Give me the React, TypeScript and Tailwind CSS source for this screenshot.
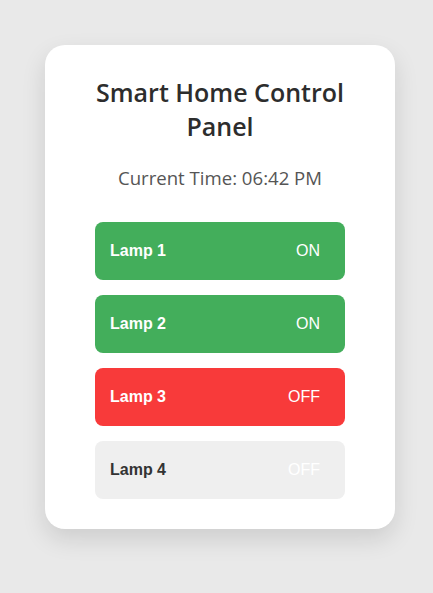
const lamps = [
  { name: "Lamp 1", state: "ON", style: "bg-[#43ae5b] text-white" },
  { name: "Lamp 2", state: "ON", style: "bg-[#43ae5b] text-white" },
  { name: "Lamp 3", state: "OFF", style: "bg-[#f83a3a] text-white" },
  { name: "Lamp 4", state: "OFF", style: "bg-[#efefef] text-[#333]" },
];

export default function App() {
  return (
    <div className="min-h-[593px] w-full bg-[#e9e9e9] pt-[45px] pl-[45px] flex">
      {/* Panel card */}
      <div className="w-[350px] h-fit bg-white rounded-[20px] px-[50px] py-[30px] shadow-[0_10px_25px_rgba(0,0,0,0.12)]">
        <h2 className="text-center text-[25px] leading-[34px] font-semibold text-[#2d2d2d] whitespace-nowrap font-['Open_Sans',sans-serif]">
          Smart Home Control
          <br />
          Panel
        </h2>
        <p className="text-center text-[18.6px] leading-[27px] text-[#555] mt-[21px] font-['Open_Sans',sans-serif]">
          Current Time: 06:42 PM
        </p>

        <div className="mt-[31px] flex flex-col gap-[15px]">
          {lamps.map((lamp) => (
            <div
              key={lamp.name}
              className={`h-[58px] rounded-[8px] pl-[15px] pr-[25px] flex items-center justify-between font-['Liberation_Sans',sans-serif] text-[16px] ${lamp.style}`}
            >
              <span className="font-bold">{lamp.name}</span>
              <span className={lamp.name === "Lamp 4" ? "text-white" : ""}>{lamp.state}</span>
            </div>
          ))}
        </div>
      </div>
    </div>
  );
}
